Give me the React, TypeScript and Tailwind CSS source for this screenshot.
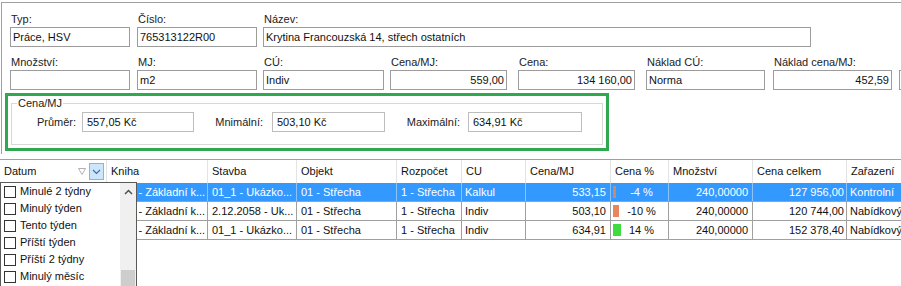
import React from 'react';

const FONT = "font-['Liberation_Sans',Arial,sans-serif]";

interface FieldProps {
    label: string;
    value?: string;
    w: number;
    inputW: number;
    right?: boolean;
}

function Field({ label, value, w, inputW, right }: FieldProps) {
    return (
        <div className="shrink-0 flex flex-col" style={{ width: w }}>
            <span className="h-[15px] leading-[15px] pl-[1px] whitespace-nowrap text-[#222]">{label}</span>
            <div
                className={`h-[20px] border border-[#9c9c9c] bg-white flex items-center whitespace-nowrap overflow-hidden ${right ? 'justify-end pr-[2px]' : 'pl-[2px]'}`}
                style={{ width: inputW }}
            >
                {value}
            </div>
        </div>
    );
}

const headers = ['Datum', 'Kniha', 'Stavba', 'Objekt', 'Rozpočet', 'CU', 'Cena/MJ', 'Cena %', 'Množství', 'Cena celkem', 'Zařazení'];

interface Row {
    kniha: string;
    stavba: string;
    cu: string;
    cena: string;
    pct: string;
    barW: number;
    barColor: string;
    celkem: string;
    zar: string;
    selected?: boolean;
}

const rows: Row[] = [
    { kniha: '0001 - Základní k...', stavba: '01_1 - Ukázko...', cu: 'Kalkul', cena: '533,15', pct: '-4 %', barW: 3, barColor: '#c98a72', celkem: '127 956,00', zar: 'Kontrolní', selected: true },
    { kniha: '0001 - Základní k...', stavba: '2.12.2058 - Uk...', cu: 'Indiv', cena: '503,10', pct: '-10 %', barW: 6, barColor: '#e8855f', celkem: '120 744,00', zar: 'Nabídkový' },
    { kniha: '0001 - Základní k...', stavba: '01_1 - Ukázko...', cu: 'Indiv', cena: '634,91', pct: '14 %', barW: 8, barColor: '#3edc3e', celkem: '152 378,40', zar: 'Nabídkový' },
];

const gridCols = 'grid grid-cols-[107px_101px_89px_100px_65px_64px_85px_58px_84px_94px_100px]';

const filterItems = ['Minulé 2 týdny', 'Minulý týden', 'Tento týden', 'Příští týden', 'Příští 2 týdny', 'Minulý měsíc'];

export default function App() {
    return (
        <div className={`relative w-[901px] h-[286px] overflow-hidden bg-white text-[11px] text-[#111] ${FONT}`}>
            {/* Horní panel */}
            <div className="mt-[2px] ml-[1px] h-[152px] border-t border-l border-[#a0a0a0]">
                <div className="pl-[8px] pt-[9px]">
                    <div className="flex">
                        <Field label="Typ:" value="Práce, HSV" w={127} inputW={120} />
                        <Field label="Číslo:" value="765313122R00" w={126} inputW={120} />
                        <Field label="Název:" value="Krytina Francouzská 14, střech ostatních" w={560} inputW={548} />
                    </div>
                    <div className="flex mt-[8px]">
                        <Field label="Množství:" w={127} inputW={120} />
                        <Field label="MJ:" value="m2" w={126} inputW={120} />
                        <Field label="CÚ:" value="Indiv" w={127} inputW={121} />
                        <Field label="Cena/MJ:" value="559,00" w={128} inputW={117} right />
                        <Field label="Cena:" value="134 160,00" w={128} inputW={117} right />
                        <Field label="Náklad CÚ:" value="Norma" w={127} inputW={119} />
                        <Field label="Náklad cena/MJ:" value="452,59" w={126} inputW={119} right />
                        <Field label="" w={127} inputW={120} />
                    </div>
                </div>

                {/* Zelený rámeček */}
                <div className="ml-[3px] mt-[3px] w-[604px] h-[58px] border-[3px] border-[#2fa84f]">
                    <fieldset className="mx-[3px] h-[49px] border border-[#d8d8d8]">
                        <legend className="ml-[5px] px-[1px] leading-[14px] text-[#222]">Cena/MJ</legend>
                        <div className="flex items-center h-[20px] mt-[2px] text-[#222]">
                            <span className="w-[64px] text-right">Průměr:</span>
                            <div className="ml-[6px] w-[112px] h-[20px] border border-[#bdbdbd] pl-[4px] flex items-center text-[#111]">557,05 Kč</div>
                            <span className="w-[69px] text-right">Mnimální:</span>
                            <div className="ml-[9px] w-[113px] h-[20px] border border-[#bdbdbd] pl-[4px] flex items-center text-[#111]">503,10 Kč</div>
                            <span className="w-[75px] text-right">Maximální:</span>
                            <div className="ml-[8px] w-[114px] h-[20px] border border-[#bdbdbd] pl-[4px] flex items-center text-[#111]">634,91 Kč</div>
                        </div>
                    </fieldset>
                </div>
            </div>

            {/* Tabulka */}
            <div className="mt-[5px] border-t border-[#a0a0a0]">
                <div className={`${gridCols} h-[23px]`}>
                    {headers.map((h, i) => (
                        <div key={h} className="border-r border-[#e3e3e3] pl-[4px] flex items-center whitespace-nowrap overflow-hidden">
                            {i === 0 ? (
                                <div className="flex items-center w-full">
                                    <span className="flex-1">{h}</span>
                                    <svg width="8" height="7" viewBox="0 0 8 7" className="mr-[3px]">
                                        <path d="M0.5 0.5 H7.5 L4 6.5 Z" fill="none" stroke="#b0b0b0" strokeWidth="1" />
                                    </svg>
                                    <div className="w-[15px] h-[17px] mr-[2px] bg-[#cde6fb] border border-[#7fb7e8] flex items-center justify-center">
                                        <svg width="9" height="6" viewBox="0 0 9 6">
                                            <path d="M1 1 L4.5 4.5 L8 1" fill="none" stroke="#3b6fa8" strokeWidth="1.2" />
                                        </svg>
                                    </div>
                                </div>
                            ) : (
                                h
                            )}
                        </div>
                    ))}
                </div>
                {rows.map((r, idx) => {
                    const sel = r.selected;
                    const line = sel ? 'border-[#8cc3fb]' : 'border-[#a0a0a0]';
                    const cell = `border-r ${line} px-[4px] flex items-center whitespace-nowrap overflow-hidden`;
                    return (
                        <div
                            key={idx}
                            className={`${gridCols} h-[19px] border-b border-[#a0a0a0] ${sel ? 'bg-[#3399ff] text-white' : ''}`}
                        >
                            {/* Datum – zakryto rozbalovacím filtrem */}
                            <div className={cell} />
                            <div className={cell}>{r.kniha}</div>
                            <div className={cell}>{r.stavba}</div>
                            <div className={cell}>01 - Střecha</div>
                            <div className={cell}>1 - Střecha</div>
                            <div className={`${cell} !px-[3px]`}>{r.cu}</div>
                            <div className={`${cell} justify-end`}>{r.cena}</div>
                            <div className={`border-r ${line} pl-[2px] flex items-center whitespace-nowrap overflow-hidden`}>
                                <div className="w-[8px] h-[12px] flex">
                                    <div className="h-full" style={{ width: r.barW, backgroundColor: r.barColor }} />
                                </div>
                                <span className="flex-1 text-center pr-[6px]">{r.pct}</span>
                            </div>
                            <div className={`${cell} justify-end`}>240,00000</div>
                            <div className={`${cell} justify-end !pr-[2px]`}>{r.celkem}</div>
                            <div className={`${cell} !px-[3px]`}>{r.zar}</div>
                        </div>
                    );
                })}
            </div>

            {/* Filtr - rozbalovací seznam */}
            <div className="absolute left-0 top-[182px] w-[137px] h-[112px] border border-[#5a5a5a] bg-white flex">
                <div className="flex-1 flex flex-col">
                    {filterItems.map((t) => (
                        <div key={t} className="h-[17px] flex items-center pl-[3px] gap-[4px] whitespace-nowrap text-[#111]">
                            <div className="w-[12px] h-[12px] border border-[#333] bg-white shrink-0" />
                            <span>{t}</span>
                        </div>
                    ))}
                </div>
                <div className="w-[16px] bg-[#f0f0f0] flex flex-col">
                    <div className="h-[17px] flex items-center justify-center">
                        <svg width="9" height="6" viewBox="0 0 9 6">
                            <path d="M1 5 L4.5 1.5 L8 5" fill="none" stroke="#505050" strokeWidth="1.5" />
                        </svg>
                    </div>
                    <div className="flex-1" />
                    <div className="h-[23px] mx-[1px] bg-[#cdcdcd]" />
                </div>
            </div>
        </div>
    );
}
